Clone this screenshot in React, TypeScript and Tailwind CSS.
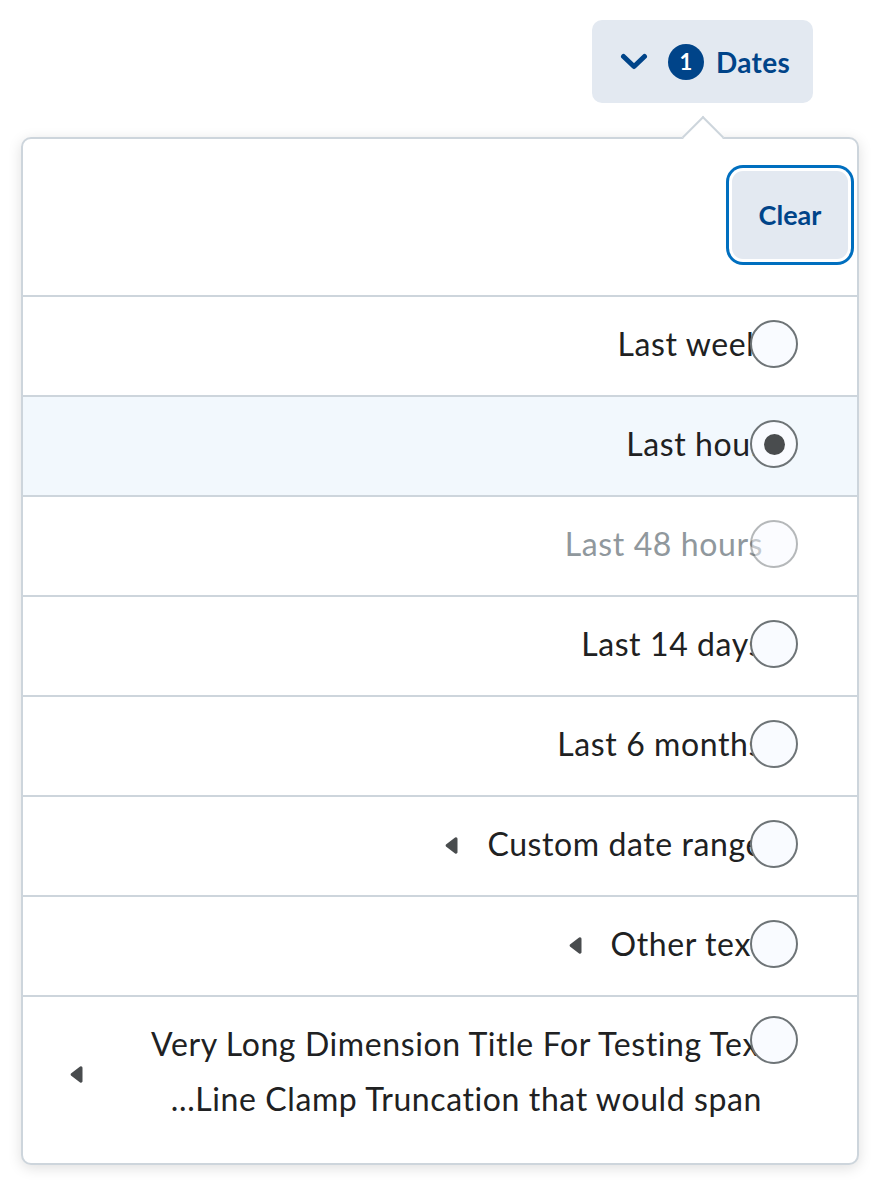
import React from "react";

const Caret = () => (
  <svg width="13" height="17" viewBox="0 0 13 17" className="shrink-0">
    <path d="M11 1.8 L2.2 8.5 L11 15.2 Z" fill="#494c4e" stroke="#494c4e" strokeWidth="3" strokeLinejoin="round" />
  </svg>
);

const Radio = ({ checked = false, disabled = false }: { checked?: boolean; disabled?: boolean }) => (
  <span
    className={
      "relative z-10 flex h-[48px] w-[48px] shrink-0 items-center justify-center rounded-full border-2 border-[#6e7477] bg-[#f9fbff] " +
      (disabled ? "opacity-50" : "")
    }
  >
    {checked && <span className="h-[21px] w-[21px] rounded-full bg-[#494c4e]" />}
  </span>
);

type Row = { label: string; checked?: boolean; disabled?: boolean; caret?: boolean; selected?: boolean };

const rows: Row[] = [
  { label: "Last week" },
  { label: "Last hour", checked: true, selected: true },
  { label: "Last 48 hours", disabled: true },
  { label: "Last 14 days" },
  { label: "Last 6 months" },
  { label: "Custom date range", caret: true },
  { label: "Other text", caret: true },
];

export default function App() {
  return (
    <div
      className="flex h-[1186px] w-[880px] flex-col bg-white text-[#202122]"
      style={{ fontFamily: "Lato, 'Open Sans', sans-serif" }}
    >
      <div className="flex justify-end pr-[67px] pt-[20px]">
        <button className="flex h-[83px] w-[221px] items-center rounded-[10px] bg-[#e3e9f1] pl-[28px] text-[#004489]">
          <svg width="28" height="18" viewBox="0 0 28 18" className="shrink-0">
            <path d="M3.5 3.5 L14 13.5 L24.5 3.5" fill="none" stroke="#004489" strokeWidth="5" strokeLinecap="round" strokeLinejoin="round" />
          </svg>
          <span className="ml-[20px] flex h-[36px] w-[36px] items-center justify-center rounded-full bg-[#004489] text-[22px] font-bold leading-none text-white">
            1
          </span>
          <span className="ml-[12px] text-[28px] font-bold leading-none tracking-[0.3px]">Dates</span>
        </button>
      </div>

      <div className="relative mx-[21px] mt-[34px] rounded-[10px] border-2 border-[#cdd5dc] bg-white shadow-[0_3px_14px_rgba(0,0,0,0.13)]">
        <div className="absolute left-[665px] top-[-17px] h-[30px] w-[30px] rotate-45 border-l-2 border-t-2 border-[#cdd5dc] bg-white" />

        <div className="relative flex h-[156px] items-start justify-end pr-[9px] pt-[32px]">
          <button className="flex h-[88px] w-[116px] items-center justify-center rounded-[11px] bg-[#e3e9f1] text-[27px] font-bold text-[#004489] shadow-[0_0_0_3px_#ffffff,0_0_0_6px_#006fbf]">
            Clear
          </button>
        </div>

        {rows.map((r) => (
          <div
            key={r.label}
            className={
              "flex h-[100px] items-center justify-end border-t-2 border-[#cdd5dc] pb-[4px] pr-[59px] " +
              (r.selected ? "bg-[#f2f8fd]" : "")
            }
          >
            {r.caret && (
              <span className="mr-[29px] flex items-center pt-[3px]">
                <Caret />
              </span>
            )}
            <span
              className={
                "whitespace-nowrap text-[32px] leading-none tracking-[0.6px] " +
                (r.disabled ? "text-[#90989d]" : "text-[#202122]")
              }
            >
              {r.label}
            </span>
            <span className="-ml-[13px]">
              <Radio checked={r.checked} disabled={r.disabled} />
            </span>
          </div>
        ))}

        <div className="flex h-[168px] items-center border-t-2 border-[#cdd5dc] pb-[18px] pl-[47px] pr-[59px]">
          <span className="pt-[6px]">
            <Caret />
          </span>
          <div className="flex-1 whitespace-nowrap text-right text-[32px] leading-[55px] tracking-[0.6px]">
            <div className="-mr-[8px]">Very Long Dimension Title For Testing Text</div>
            <div className="pr-[1px]">…Line Clamp Truncation that would span</div>
          </div>
          <span className="-ml-[13px] mt-[19px] self-start">
            <Radio />
          </span>
        </div>
      </div>
    </div>
  );
}
